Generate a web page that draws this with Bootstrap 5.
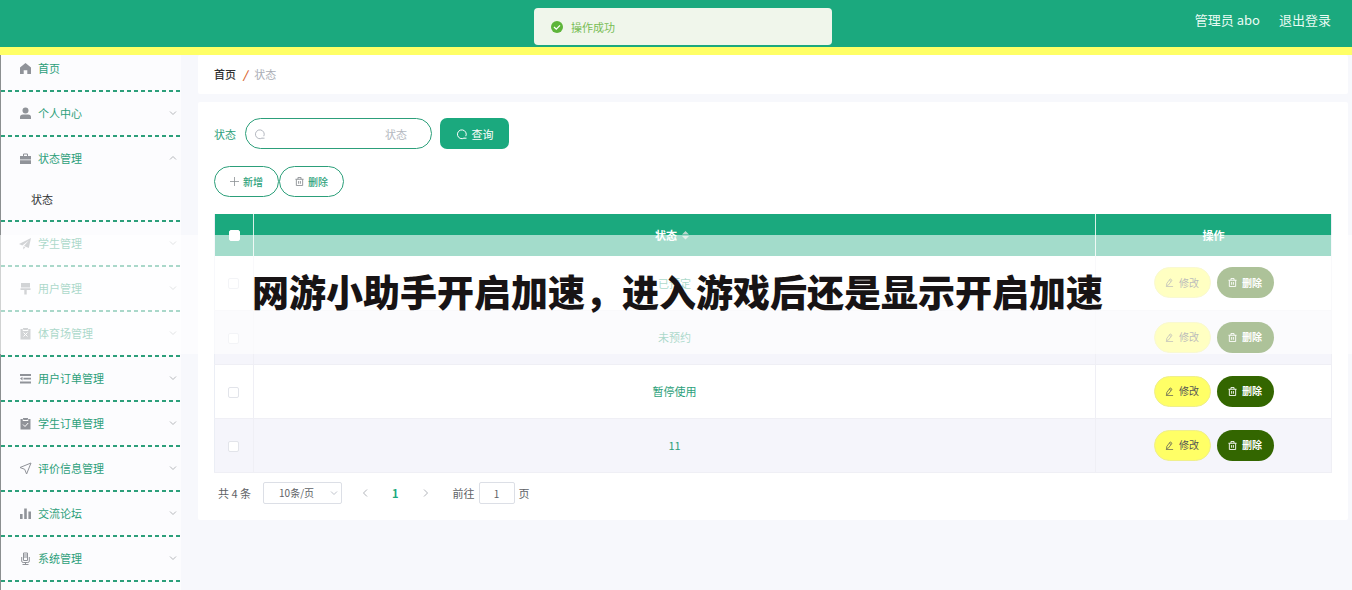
<!DOCTYPE html>
<html lang="zh-CN">
<head>
<meta charset="utf-8">
<meta name="viewport" content="width=device-width, initial-scale=1">
<title>状态管理</title>
<link href="https://cdn.jsdelivr.net/npm/bootstrap@5.3.0/dist/css/bootstrap.min.css" rel="stylesheet">
<style>
:root{--brand:#1ba97e;--brand-text:#2c9f7a;--lemon:#ffff66}
body{font-family:"Noto Sans CJK SC","Liberation Sans",sans-serif;font-size:11px;line-height:16px;background:#f7f8fc;color:#606266;position:relative;min-height:100vh;overflow-x:hidden}
svg{display:block;flex:none}
input,select,button{font-family:inherit}
a{text-decoration:none}
.topbar{background:var(--brand);height:55px;border-bottom:8px solid var(--lemon);position:relative;z-index:2;padding:0 21px 7px;gap:19px}
.topbar a,.topbar span{color:#e9fbf4;font-size:13px}
.toast-ok{position:absolute;left:39.5%;top:8px;width:298px;height:37px;background:#f0f6eb;border-radius:4px;padding:0 17px;gap:8px;color:#78bd55;z-index:3}
.side{width:181px;margin-top:-8px;background:#fcfcfe;border-left:1px solid #8b8f90;flex:none;min-height:calc(100vh - 47px)}
.side li{padding-bottom:2px;background:repeating-linear-gradient(90deg,var(--brand-text) 0 4px,transparent 4px 7px) left bottom/179px 2px no-repeat}
.side .entry{height:43px;padding:0 4px 2px 18px;gap:6px;color:var(--brand-text)}
.side .entry svg:first-child{color:#909399;margin-top:2px}
.side .arrow{margin-left:auto;color:#b5b7bb}
.side .sub{height:40px;padding:0 0 3px 30px;color:#303133}
main{padding:0 4px 0 17px;min-width:0}
.panel{background:#fff;padding:0 16px;border-radius:2px}
.crumbs{height:39px;margin-bottom:8px;padding-bottom:2px;gap:7px}
.crumbs a{color:#303133;font-weight:500}
.crumbs i{color:#d9662c;font-weight:700}
.crumbs span{color:#a9adb5}
.query label{color:var(--brand-text);margin-right:9px}
.search{width:187px;height:31px;border:1px solid var(--brand-text);border-radius:16px;padding:0 24px 0 8px;color:#b4b8c0}
.search input{border:0;outline:0;background:none;flex:1;min-width:0;text-align:right;padding:0}
.search input::placeholder{color:#b4b8c0}
.b{font-size:11px;line-height:16px;padding:0;border-radius:16px;display:inline-flex;align-items:center;justify-content:center;gap:4px;height:31px}
.b-query{background:var(--brand);color:#fff;width:69px;border-radius:7px}
.tools{margin:17px 0}
.b-line{font-size:10px;border:1px solid var(--brand-text);color:var(--brand-text);background:#fff;width:65px;font-weight:500}
.b-line svg{color:#8c9094}
.b-edit,.b-del{font-size:10px;width:57px;gap:5px}
.b-edit{background:var(--lemon);border:1px solid #efef8c;color:#555}
.b-del{background:#336600;color:#fff;border:0;font-weight:700}
.grid{table-layout:fixed;width:100%;border:1px solid #ebeef5;border-top:0;margin:0;text-align:center}
.grid th{background:var(--brand);color:#fff;height:42px;padding:0;font-weight:700;border-right:1px solid #d8f0e7}
.grid th:last-child{border-right:0}
.grid td{height:54px;padding:0;border-right:1px solid #efeff5;border-bottom:1px solid #efeff5;color:var(--brand-text)}
.grid tbody tr:nth-child(even){background:#f5f5fb}
.grid input{appearance:none;width:11px;height:11px;border:1px solid #e2e4ea;border-radius:2px;background:#fff;display:block;margin:2px auto 0 13px}
.grid thead input{border-color:#fff;margin:0 auto 0 14px}
.pager{height:47px;padding:0 0 6px 4px}
.pager select,.pager input{border:1px solid #dcdfe6;border-radius:2px;height:22px;background-color:#fff;color:#606266;font-size:10px;padding:0}
.pager select{appearance:none;width:79px;padding-left:15px}
.pager input{width:36px}
.pager button{border:0;background:none;padding:0;color:#b0b3b9}
.pager .current{color:var(--brand);font-weight:700;padding:0 23px}
.notice{position:absolute;left:0;right:0;top:235px;height:119px;background:rgba(255,255,255,.6);z-index:5;pointer-events:none;padding-bottom:8px;padding-left:3px;color:#181415;font-size:37px;line-height:50px;font-weight:900;white-space:nowrap}
</style>
</head>
<body>
<svg width="0" height="0" class="position-absolute" aria-hidden="true">
<defs>
<symbol id="down" viewBox="0 0 8 8"><path d="M1 2.5l3 3 3-3" fill="none" stroke="currentColor"/></symbol>
<symbol id="glass" viewBox="0 0 12 12"><path d="M8.200 10A4.400 4.400 0 1 1 9.800 8.200M8 10.200h2.500" fill="none" stroke="currentColor"/></symbol>
<symbol id="bin" viewBox="0 0 10 10"><path d="M.5 2.5h9M3.3 2.5v-2h3.4v2M1.500 2.5v7h7v-7M4 4.500v3M6 4.500v3" fill="none" stroke="currentColor"/></symbol>
<symbol id="pen" viewBox="0 0 10 10"><path d="M2 6l3.800-5 2 1.500L4 7.600 1.600 8.600zM1 9.500h8M4.800 2.400l2 1.500" fill="none" stroke="currentColor" stroke-width=".8"/></symbol>
</defs>
</svg>

<header class="topbar d-flex align-items-center justify-content-end">
  <span>管理员 abo</span>
  <a href="#">退出登录</a>
</header>
<div class="toast-ok d-flex align-items-center" role="status">
  <svg width="12" height="12" viewBox="0 0 12 12"><circle cx="6" cy="6" r="6" fill="#5eb53a"/><path d="M3 6l2.300 2.200L9 4.400" fill="none" stroke="#fff" stroke-width="1.300"/></svg>
  <span>操作成功</span>
</div>

<div class="d-flex align-items-stretch">
  <nav class="side">
    <ul class="list-unstyled m-0">
      <li><a class="entry d-flex align-items-center" href="#"><svg width="13" height="13" viewBox="0 0 13 13"><path d="M6.500 1L12 5.600V12H8.300V8.200H4.700V12H1V5.600z" fill="currentColor"/></svg>首页</a></li>
      <li><a class="entry d-flex align-items-center" href="#"><svg width="13" height="13" viewBox="0 0 13 13"><circle cx="6.500" cy="3.600" r="3" fill="currentColor"/><path d="M1 12V10q0-2.500 3-2.500h5q3 0 3 2.500v2z" fill="currentColor"/></svg>个人中心<svg class="arrow" width="8" height="8"><use href="#down"/></svg></a></li>
      <li><a class="entry d-flex align-items-center" href="#"><svg width="13" height="13" viewBox="0 0 13 13"><path d="M4.500 4V2h4v2" fill="none" stroke="currentColor"/><path d="M1 4h11v3.400H1zM1 8.200h11V12H1z" fill="currentColor"/></svg>状态管理<svg class="arrow" width="8" height="8" viewBox="0 0 8 8"><path d="M1 5.500l3-3 3 3" fill="none" stroke="currentColor"/></svg></a>
        <a class="sub d-flex align-items-center" href="#">状态</a></li>
      <li><a class="entry d-flex align-items-center" href="#"><svg width="13" height="13" viewBox="0 0 13 13"><path d="M12 1L0 7l3.300 1.400L9.800 3.500 5 9l4.800 2zM4.300 9.400V12.500l2-2.200z" fill="currentColor"/></svg>学生管理<svg class="arrow" width="8" height="8"><use href="#down"/></svg></a></li>
      <li><a class="entry d-flex align-items-center" href="#"><svg width="13" height="13" viewBox="0 0 13 13"><path d="M2 1h9v4.500H2zM1.500 6.200h10V8H7.700v4.500H5.300V8H1.500z" fill="currentColor"/></svg>用户管理<svg class="arrow" width="8" height="8"><use href="#down"/></svg></a></li>
      <li><a class="entry d-flex align-items-center" href="#"><svg width="13" height="13" viewBox="0 0 13 13"><path d="M1.500 2H4V1h5v1h2.500v10.500h-10z" fill="currentColor"/><path d="M4 2.500v1h5v-1M4.500 5.500l4 4M8.500 5.500l-4 4" fill="none" stroke="#fff"/></svg>体育场管理<svg class="arrow" width="8" height="8"><use href="#down"/></svg></a></li>
      <li><a class="entry d-flex align-items-center" href="#"><svg width="13" height="13" viewBox="0 0 13 13"><path d="M1 2h11v2H1zM4.500 5.700H12v1.800H4.500zM1 9.500h11v2H1zM3.500 4.700v3.800L1 6.600z" fill="currentColor"/></svg>用户订单管理<svg class="arrow" width="8" height="8"><use href="#down"/></svg></a></li>
      <li><a class="entry d-flex align-items-center" href="#"><svg width="13" height="13" viewBox="0 0 13 13"><path d="M1.500 2H4V1h5v1h2.500v10.500h-10z" fill="currentColor"/><path d="M4 2.500v1h5v-1M4 7.500l2 2 3.200-3.500" fill="none" stroke="#fff"/></svg>学生订单管理<svg class="arrow" width="8" height="8"><use href="#down"/></svg></a></li>
      <li><a class="entry d-flex align-items-center" href="#"><svg width="13" height="13" viewBox="0 0 13 13"><path d="M12 1L1 5.500l4.700 1.800L7.600 12z" fill="none" stroke="currentColor"/></svg>评价信息管理<svg class="arrow" width="8" height="8"><use href="#down"/></svg></a></li>
      <li><a class="entry d-flex align-items-center" href="#"><svg width="13" height="13" viewBox="0 0 13 13"><path d="M1 7h2.600v5H1zM5.200 1.500h2.600V12H5.200zM9.400 4.500H12V12H9.400z" fill="currentColor"/></svg>交流论坛<svg class="arrow" width="8" height="8"><use href="#down"/></svg></a></li>
      <li><a class="entry d-flex align-items-center" href="#"><svg width="13" height="13" viewBox="0 0 13 13"><path d="M4.500 1h4v7.500h-4zM2.700 5v4q0 1.500 1.500 1.500h4.600q1.500 0 1.500-1.500V5M6.500 10v2.500M3.500 12.500h6M5 3h3M5 5h3" fill="none" stroke="currentColor"/></svg>系统管理<svg class="arrow" width="8" height="8"><use href="#down"/></svg></a></li>
    </ul>
  </nav>

  <main class="flex-grow-1">
    <nav class="panel crumbs d-flex align-items-center" aria-label="breadcrumb">
      <a href="#">首页</a><i>/</i><span>状态</span>
    </nav>
    <section class="panel pt-3">
      <form class="query d-flex align-items-center">
        <label for="q">状态</label>
        <div class="search d-flex align-items-center me-2">
          <svg width="12" height="12"><use href="#glass"/></svg>
          <input id="q" type="text" placeholder="状态">
        </div>
        <button type="button" class="btn b b-query"><svg width="12" height="12"><use href="#glass"/></svg>查询</button>
      </form>
      <div class="tools d-flex">
        <button type="button" class="btn b b-line"><svg width="9" height="9" viewBox="0 0 9 9"><path d="M0 4.500h9M4.500 0v9" stroke="currentColor" stroke-width=".8"/></svg>新增</button>
        <button type="button" class="btn b b-line"><svg width="9" height="9"><use href="#bin"/></svg>删除</button>
      </div>
      <table class="grid">
        <colgroup><col width="39"><col><col width="236"></colgroup>
        <thead><tr>
          <th><input type="checkbox" aria-label="全选"></th>
          <th><span class="d-inline-flex align-items-center gap-1 pe-1">状态<svg width="9" height="10" viewBox="0 0 9 10"><path d="M4.500 1L8 4.500H1zM4.500 9.500L1 6h7z" fill="#b9d6cd"/></svg></span></th>
          <th>操作</th>
        </tr></thead>
        <tbody id="rows"></tbody>
      </table>
      <div class="pager d-flex align-items-center">
        <span>共 4 条</span>
        <div class="position-relative ms-2 d-flex align-items-center ps-1">
          <select aria-label="每页条数"><option>10条/页</option></select>
          <svg class="position-absolute end-0 me-1" width="8" height="8" color="#c0c4cc"><use href="#down"/></svg>
        </div>
        <button type="button" class="ms-3 ps-1" aria-label="上一页"><svg width="7" height="8" viewBox="0 0 7 8"><path d="M5 .5L1.500 4 5 7.500" fill="none" stroke="currentColor"/></svg></button>
        <button type="button" class="current">1</button>
        <button type="button" aria-label="下一页"><svg width="7" height="8" viewBox="0 0 7 8"><path d="M2 .5L5.500 4 2 7.500" fill="none" stroke="currentColor"/></svg></button>
        <label for="page" class="ms-4 me-1">前往</label>
        <input id="page" class="text-center me-1" type="text" size="1" value="1">
        <span>页</span>
      </div>
    </section>
  </main>
</div>

<div class="notice d-flex align-items-center justify-content-center">网游小助手开启加速，进入游戏后还是显示开启加速</div>

<script>
document.getElementById('rows').innerHTML = ['已预定', '未预约', '暂停使用', '11'].map(function (name) {
  return '<tr><td><input type="checkbox" aria-label="' + name + '"></td><td>' + name + '</td><td>' +
    '<div class="d-flex justify-content-center" style="gap:6px">' +
    '<button type="button" class="btn b b-edit"><svg width="9" height="9"><use href="#pen"/></svg>修改</button>' +
    '<button type="button" class="btn b b-del"><svg width="9" height="9"><use href="#bin"/></svg>删除</button></div></td></tr>';
}).join('');
</script>
<script src="https://cdn.jsdelivr.net/npm/bootstrap@5.3.0/dist/js/bootstrap.bundle.min.js"></script>
</body>
</html>
